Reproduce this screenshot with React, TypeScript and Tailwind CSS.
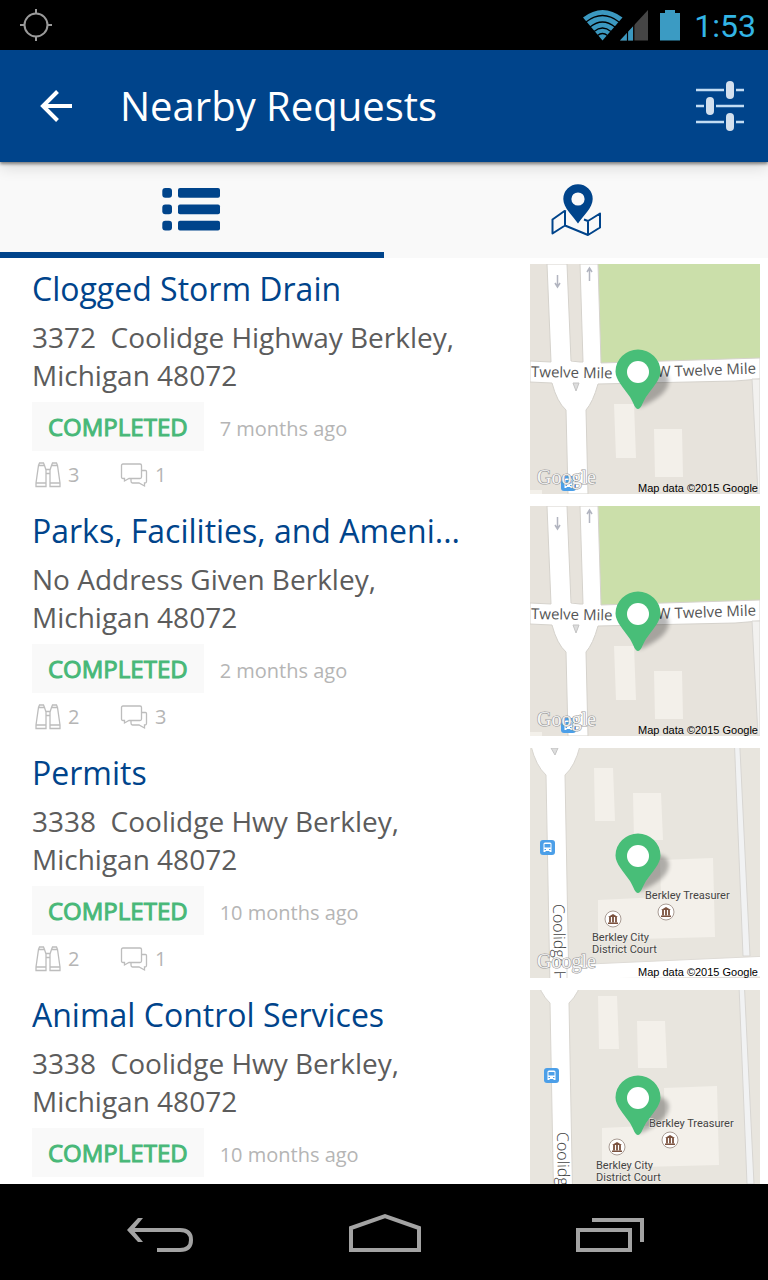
import React from "react";

type MapKind = "mile" | "court" | "courtShifted";

interface ServiceRequest {
  title: string;
  street: string;
  region: string;
  age: string;
  watchers: number;
  comments: number;
  map: MapKind;
}

const requests: ServiceRequest[] = [
  { title: "Clogged Storm Drain", street: "3372\u00a0 Coolidge Highway Berkley,", region: "Michigan 48072", age: "7 months ago", watchers: 3, comments: 1, map: "mile" },
  { title: "Parks, Facilities, and Ameni...", street: "No Address Given Berkley,", region: "Michigan 48072", age: "2 months ago", watchers: 2, comments: 3, map: "mile" },
  { title: "Permits", street: "3338\u00a0 Coolidge Hwy Berkley,", region: "Michigan 48072", age: "10 months ago", watchers: 2, comments: 1, map: "court" },
  { title: "Animal Control Services", street: "3338\u00a0 Coolidge Hwy Berkley,", region: "Michigan 48072", age: "10 months ago", watchers: 2, comments: 1, map: "courtShifted" },
];

function StatusBar() {
  return (
    <div className="flex h-[50px] shrink-0 items-center justify-between bg-black pr-3 pl-5">
      <svg width="32" height="32" viewBox="0 0 32 32" fill="none" stroke="#9a9a9a" strokeWidth="2" aria-hidden="true">
        <circle cx="16" cy="16" r="11.5" />
        <path d="M16 0v5M16 27v5M0 16h5M27 16h5" />
      </svg>
      <div className="flex items-center">
        <svg width="100" height="32" viewBox="0 0 100 32" aria-hidden="true">
          <path d="M1 8.5Q20.500 -6.500 40.500 8.500L20.500 31.500Z" fill="#3b98c0" />
          <g fill="none" stroke="#000" strokeWidth="1.300">
            <path d="M4 13Q20.500 0 37 13" />
            <path d="M8 18Q20.500 8 33 18" />
            <path d="M12 22.500Q20.500 15.500 29 22.500" />
            <path d="M15.500 26.500Q20.500 22.500 25.500 26.500" />
          </g>
          <path d="M38 31.500L66 1V31.500Z" fill="#454545" />
          <path d="M38 31.500L51 17.400V31.500Z" fill="#3b98c0" />
          <path d="M45.500 20v12M51.800 15v17" stroke="#000" strokeWidth="1.200" />
          <path d="M78 4h5V1h10v3h5v27.500H78Z" fill="#3b9bc3" />
        </svg>
        <span className="ml-3 pt-0.5 font-['Roboto',sans-serif] text-[32px] leading-9 text-[#33b5e5]">1:53</span>
      </div>
    </div>
  );
}

function Header() {
  return (
    <header className="relative z-10 flex h-28 shrink-0 items-center bg-[#00448b] pr-[22px] pl-10 shadow-[0_2px_3px_rgba(0,0,0,0.45),0_6px_14px_rgba(0,0,0,0.12)]">
      <button type="button" aria-label="Back" className="shrink-0">
        <svg width="32" height="32" viewBox="0 0 32 32" fill="none" stroke="#fff" strokeWidth="4" aria-hidden="true">
          <path d="M32 16H4M17.500 1.500L3 16l14.500 14.500" />
        </svg>
      </button>
      <h1 className="ml-12 grow text-[40px] leading-[54px] text-white">Nearby Requests</h1>
      <button type="button" aria-label="Filter" className="shrink-0">
        <svg width="52" height="52" viewBox="0 0 52 52" aria-hidden="true">
          <path d="M2 10h28M42 10h8M2 26h8M22 26h28M2 42h28M42 42h8" stroke="#c2dcf3" strokeWidth="2.500" />
          <g fill="#d3e0ee">
            <rect x="32" y="1" width="8" height="18" rx="4" />
            <rect x="12" y="17" width="8" height="18" rx="4" />
            <rect x="32" y="33" width="8" height="18" rx="4" />
          </g>
        </svg>
      </button>
    </header>
  );
}

function Tabs() {
  return (
    <div role="tablist" className="grid h-24 shrink-0 grid-cols-2 bg-[#f9f9f9]">
      <button type="button" role="tab" aria-selected="true" aria-label="List" className="flex items-center justify-center border-b-6 border-[#00448b]">
        <svg width="60" height="48" viewBox="0 0 60 48" fill="#00448b" aria-hidden="true">
          <rect x="0.300" y="5" width="9.700" height="9.700" rx="3" />
          <rect x="16" y="5" width="42" height="9.700" rx="2" />
          <rect x="0.300" y="21.500" width="9.700" height="9.700" rx="3" />
          <rect x="16" y="21.500" width="42" height="9.700" rx="2" />
          <rect x="0.300" y="37.700" width="9.700" height="9.700" rx="3" />
          <rect x="16" y="37.700" width="42" height="9.700" rx="2" />
        </svg>
      </button>
      <button type="button" role="tab" aria-selected="false" aria-label="Map" className="flex items-center justify-center">
        <svg width="50" height="54" viewBox="0 0 50 54" aria-hidden="true">
          <path d="M15 28.500L13.500 28 1.500 36.500V50.500L14 42.500 37 52 49 44.500V30.500L37 38 33 36.500M14 28V42.500M37 38V52" fill="none" stroke="#00448b" strokeWidth="2" strokeLinejoin="round" />
          <path d="M27 40.500C22 33 12.300 25 12.300 16a14.700 14.700 0 0 1 29.400 0C41.700 25 32 33 27 40.500Z" fill="#00448b" />
          <circle cx="27" cy="16" r="6.600" fill="#f9f9f9" />
        </svg>
      </button>
    </div>
  );
}

function MapChrome() {
  return (
    <>
      <text x="7" y="220" fontFamily="'Liberation Serif', serif" fontSize="20" fill="#fff" fillOpacity="0.9" stroke="#9c9c9c" strokeWidth="1.200" paintOrder="stroke">Google</text>
      <text x="228" y="228" textAnchor="end" fontFamily="'Liberation Sans', sans-serif" fontSize="11" fill="#000">Map data ©2015 Google</text>
    </>
  );
}

function Pin({ blurId }: { blurId: string }) {
  return (
    <>
      <filter id={blurId} x="-50%" y="-50%" width="200%" height="200%">
        <feGaussianBlur stdDeviation="2" />
      </filter>
      <path d="M108 144C118 116 124 106 130 107C142 110 141 122 131 131Q121 139 108 144Z" fill="#000" opacity="0.28" filter={`url(#${blurId})`} />
      <path d="M108 145C105 145 104 140 100 133C94 124 85.500 116 85.500 107.500a22.500 22 0 0 1 45 0C130.500 116 122 124 116 133C112 140 111 145 108 145Z" fill="#48be78" />
      <circle cx="108" cy="108" r="11" fill="#fff" />
    </>
  );
}

function BusStop({ x, y }: { x: number; y: number }) {
  return (
    <g transform={`translate(${x} ${y})`}>
      <rect width="15" height="15" rx="3" fill="#4c9fe8" />
      <path d="M3.500 12V4Q3.500 2.500 5 2.500h5Q11.500 2.500 11.500 4v8h-2v-1h-4v1Z" fill="#fff" />
      <path d="M4.500 4h6v3.500h-6Z" fill="#4c9fe8" />
      <path d="M4.500 9.500h1.500M9 9.500h1.500" stroke="#4c9fe8" />
    </g>
  );
}

function CivicMarker({ x, y }: { x: number; y: number }) {
  return (
    <g transform={`translate(${x} ${y})`}>
      <circle r="8" fill="#fff" stroke="#a99c94" />
      <path d="M-5 -2L0 -5 5 -2ZM-5 3.500H5V5H-5Z" fill="#7b523f" />
      <path d="M-3 -2v5.500M0 -2v5.500M3 -2v5.500" stroke="#7b523f" strokeWidth="1.800" />
    </g>
  );
}

function TwelveMileMap() {
  return (
    <>
      <rect width="230" height="230" fill="#e7e3dc" />
      <path d="M68 0H230V95L71 99Z" fill="#cbdfaa" />
      <path d="M17 0H37L41 97 50 98H53L50 0H68L71 99 230 94V115L205 117 68 120Q63 138 56 146L58 230H38L36 146Q27 138 22 119L0 118V97L21 98Z" fill="#fff" stroke="#d5d2cc" />
      <path d="M38 0H49L52 97H42Z" fill="#e7e3dc" />
      <path d="M222 115H230V230H228Z" fill="#f2f1ef" stroke="#d8d6d2" />
      <path d="M84 140H104L106 194H86Z" fill="#f3f0ea" />
      <path d="M124 165H152L153 213H125Z" fill="#f3f0ea" />
      <path d="M0 226H12V230H0Z" fill="#f3f0ea" />
      <path d="M43 119H49L46 127Z" fill="#ddd" stroke="#c4c4c4" />
      <path d="M27.500 11V22M25 19l2.500 4 2.500-4M59.500 17V5M57 8l2.500-4 2.500 4" fill="none" stroke="#b2b5c0" strokeWidth="1.500" />
      <g fontFamily="'Open Sans', sans-serif" fontSize="15" fill="#555">
        <text transform="translate(1 113) rotate(1)">Twelve Mile</text>
        <text transform="translate(127 113) rotate(-2)">W Twelve Mile</text>
      </g>
      <BusStop x={31} y={212} />
    </>
  );
}

function CourtMap({ dx, dy }: { dx: number; dy: number }) {
  return (
    <>
      <rect width="230" height="230" fill="#e8e5de" />
      <g transform={`translate(${dx} ${dy})`}>
        <path d="M1 -2Q6 18 16 27L20 240H39L35 27Q45 18 50 -2Z" fill="#fff" stroke="#d8d5cf" />
        <path d="M21 0H28L25 7Z" fill="#ddd" stroke="#c4c4c4" />
        <path d="M203 -40H208L220 208H213Z" fill="#f1f2f3" stroke="#d8d6d2" />
        <path d="M37 217L240 208V229L37 231Z" fill="#fff" stroke="#dedbd6" />
        <path d="M64 20H83L85 73H65Z" fill="#f3f0ea" />
        <path d="M103 45H131L133 92H104Z" fill="#f3f0ea" />
        <path d="M130 112L183 110 185 189 68 192V152L131 149Z" fill="#f3f0ea" />
        <text transform="translate(23 156) rotate(89)" fontFamily="'Open Sans', sans-serif" fontSize="16" fontWeight="300" fill="#444">Coolidge Hwy</text>
        <BusStop x={10} y={92} />
        <CivicMarker x={83} y={171} />
        <CivicMarker x={136} y={164} />
      </g>
    </>
  );
}

function CourtLabels({ dx, dy }: { dx: number; dy: number }) {
  return (
    <g transform={`translate(${dx} ${dy})`} fontFamily="Roboto, sans-serif" fontSize="11" fill="#444" stroke="#f3f0ea" strokeWidth="1" paintOrder="stroke">
      <text x="115" y="151">Berkley Treasurer</text>
      <text x="62" y="193">Berkley City</text>
      <text x="62" y="205">District Court</text>
    </g>
  );
}

function MapThumb({ kind, id }: { kind: MapKind; id: string }) {
  const dx = kind === "courtShifted" ? 4 : 0;
  const dy = kind === "courtShifted" ? -14 : 0;
  return (
    <svg width="230" height="230" viewBox="0 0 230 230" className="shrink-0" role="img" aria-label="Map of the request location">
      {kind === "mile" ? <TwelveMileMap /> : <CourtMap dx={dx} dy={dy} />}
      <Pin blurId={`pin-shadow-${id}`} />
      {kind !== "mile" && <CourtLabels dx={dx} dy={dy} />}
      <MapChrome />
    </svg>
  );
}

function Binoculars() {
  return (
    <svg width="26" height="26" viewBox="0 0 26 26" fill="none" stroke="#bdbdbd" strokeWidth="1.300" aria-hidden="true">
      <path d="M1 24.500V21L3.500 3.500H9.500L11 8V24.500ZM1 21H11M3.500 3.500L4.500 1H8.500L9.500 3.500" />
      <path d="M25 24.500V21L22.500 3.500H16.500L15 8V24.500ZM25 21H15M22.500 3.500L21.500 1H17.500L16.500 3.500M11 7.500h4M11 11.500h4" />
    </svg>
  );
}

function Comments() {
  return (
    <svg width="28" height="26" viewBox="0 0 28 26" fill="none" stroke="#bdbdbd" strokeWidth="1.300" aria-hidden="true">
      <path d="M3 2H20Q21.500 2 21.500 3.500V15Q21.500 16.500 20 16.500H9L4.500 19V16.500H3Q1.500 16.500 1.500 15V3.500Q1.500 2 3 2Z" />
      <path d="M21.500 8.500H25.500Q26.500 8.500 26.500 9.500V19.500Q26.500 21 25 21H24.500V24L19 21H12.500Q11 21 11 19V17" />
    </svg>
  );
}

function RequestRow({ request, id }: { request: ServiceRequest; id: string }) {
  return (
    <li className="flex justify-between py-1.5 pr-2 pl-8">
      <div className="min-w-0 grow">
        <h2 className="truncate text-[32px] leading-[50px] text-[#00448b]">
          <a href="#request">{request.title}</a>
        </h2>
        <p className="mt-1 text-[28px] leading-[38px] text-[#5c5c5c]">
          {request.street}
          <br />
          {request.region}
        </p>
        <div className="mt-2 flex h-[49px] items-center">
          <span className="flex h-full items-center bg-[#f9f9f9] px-4 text-2xl text-[#48b878] [-webkit-text-stroke:1px_#48b878]">COMPLETED</span>
          <span className="ml-4 pt-1 text-xl text-[#b5b5b5]">{request.age}</span>
        </div>
        <div className="mt-2.5 flex items-center pl-[3px] text-xl leading-7 text-[#b5b5b5]">
          <span className="flex w-[85px] items-center gap-[7px]">
            <Binoculars />
            {request.watchers}
          </span>
          <span className="flex items-center gap-[7px]">
            <Comments />
            {request.comments}
          </span>
        </div>
      </div>
      <MapThumb kind={request.map} id={id} />
    </li>
  );
}

function NavBar() {
  return (
    <nav className="flex h-24 shrink-0 items-center justify-between bg-black pr-[124px] pl-[126px]">
      <button type="button" aria-label="Back">
        <svg width="68" height="40" viewBox="0 0 68 40" aria-hidden="true">
          <path d="M6 18H54Q65 18 65 28T54 38H31" fill="none" stroke="#a3a3a3" strokeWidth="4" />
          <path d="M1 18L12 6H17L7 18 17 30H12Z" fill="#a3a3a3" />
        </svg>
      </button>
      <button type="button" aria-label="Home">
        <svg width="72" height="40" viewBox="0 0 72 40" fill="none" stroke="#a3a3a3" strokeWidth="4" aria-hidden="true">
          <path d="M2 38V16L36 4 70 16V38Z" />
        </svg>
      </button>
      <button type="button" aria-label="Recent apps">
        <svg width="68" height="40" viewBox="0 0 68 40" fill="none" stroke="#a3a3a3" strokeWidth="4" aria-hidden="true">
          <path d="M2 18H54V38H2ZM16 8H66V30" />
        </svg>
      </button>
    </nav>
  );
}

export default function App() {
  return (
    <div className="flex h-screen flex-col bg-white font-['Open_Sans',sans-serif]">
      <StatusBar />
      <Header />
      <Tabs />
      <ul className="min-h-0 grow overflow-hidden">
        {requests.map((request, index) => (
          <RequestRow key={request.title} request={request} id={String(index)} />
        ))}
      </ul>
      <NavBar />
    </div>
  );
}
